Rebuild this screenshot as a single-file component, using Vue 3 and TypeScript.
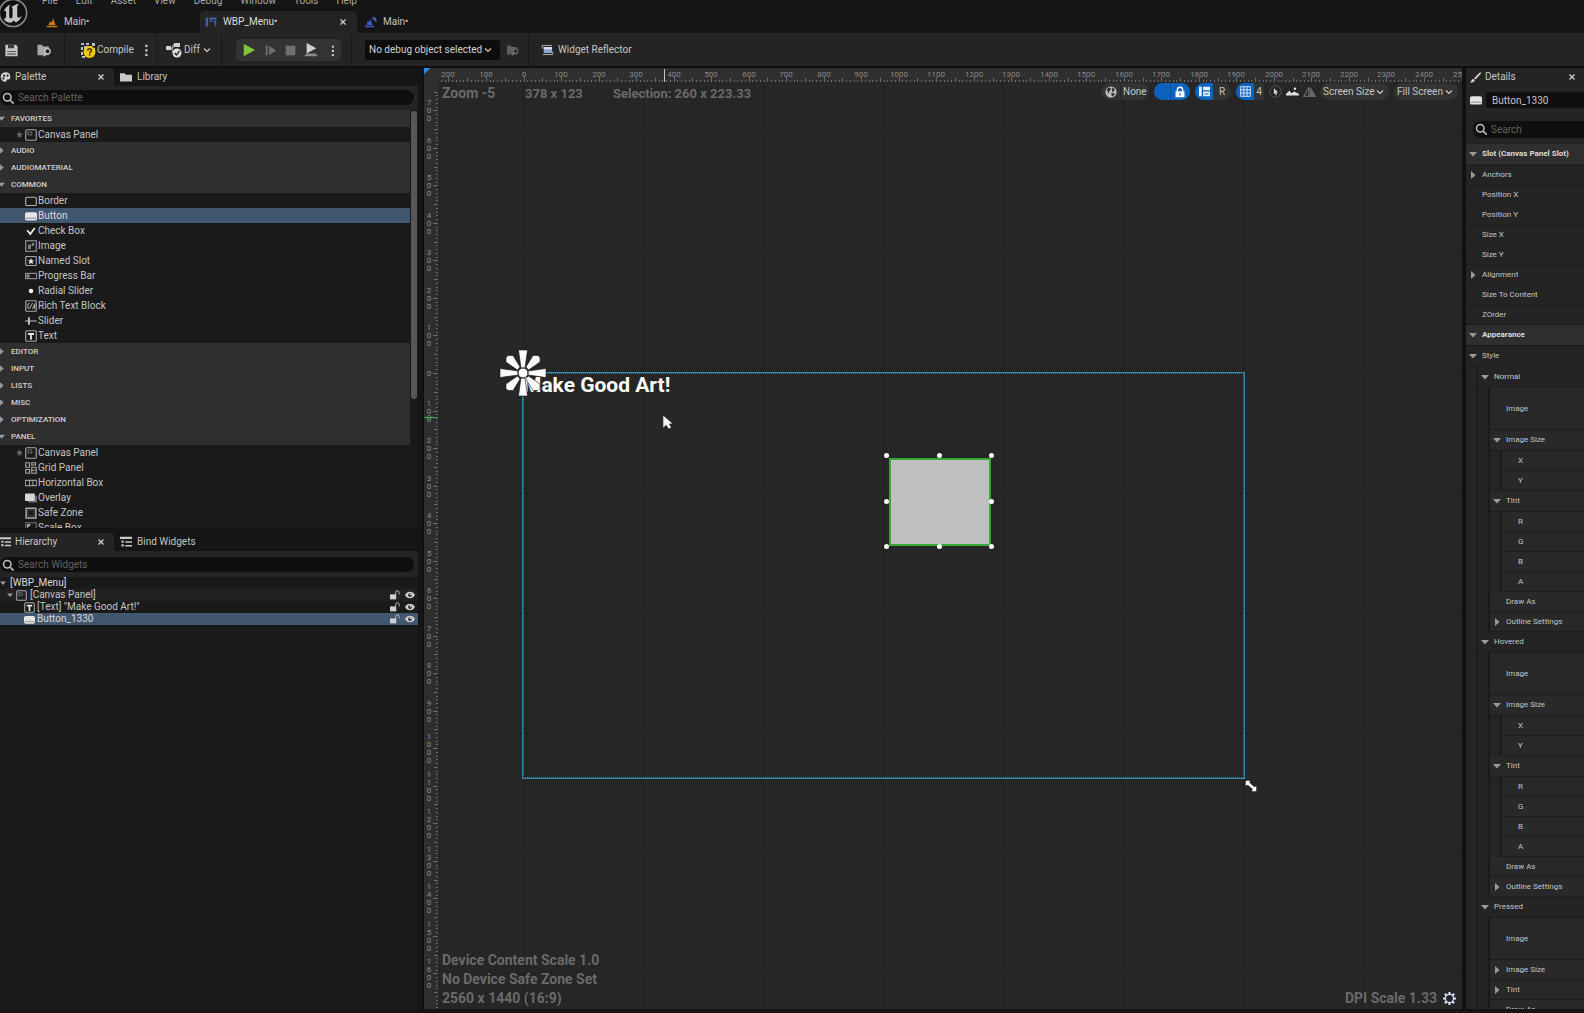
<script setup lang="ts">
import { computed, h, onBeforeUnmount, onMounted, ref } from 'vue'

const icons: Record<string, string> = {
  unreal:
    '<circle cx="16" cy="16" r="14.5" fill="#101010" stroke="#8c8c8c" stroke-width="1.6"/><path d="M6 15c1-4 4-7 8-8-1.500 1-2 2-2 3.500V20c0 1 .6 1.700 1.600 1.700S15.500 21 15.500 20v-8.500c0-1-.5-1.600-1.300-2C16.500 8 19 6.500 22.500 6c-1.500 1.500-2 2.500-2 4v9.500c0 1 .8 1.500 1.500 1.500 1.200 0 2.500-1 3.500-2.500-1 4-3.500 6.500-6.500 7.500l-2-2-3 2.500c-4 0-7-2-8-5 1.200.6 2.600.5 2.600-1.200v-5.500C8.600 13 7.500 13 6 15z" fill="#c4c4c4"/>',
  level: '<path d="M1 13h14v2H1zM3 12l2.500-5 2 2L9.500 3l3 9z" fill="#d07a1c"/>',
  widget: '<path d="M1 2h3v12H1zM6 2h9v3H6zM6 6h4v2H6zM12 6h3v8h-2V9h-1z" fill="#3c5fae"/>',
  actor: '<path d="M0 13h12v2H0zM2 12l2-6 2 2 1.500-4L10 12zM10 1l4 1 2 5-2 1-2-3-2 0z" fill="#3a5fc4"/>',
  save: '<path d="M1 2h12l2 2v11H1z" fill="#c6c6c6"/><path d="M4 2h7v4H4zM3 9h10v1H3zM3 12h10v1H3z" fill="#3a3a3a"/>',
  browse:
    '<path d="M0 2h5l1.500 2H13v10H0z" fill="#a8a8a8"/><circle cx="11.500" cy="9.500" r="3" fill="#242424" stroke="#c4c4c4" stroke-width="1.500"/><path d="M9.500 12L7 15" stroke="#c4c4c4" stroke-width="1.800"/>',
  compile:
    '<path d="M1 1h3v2H1zM6 1h3v2H6zM12 1h3v3h-3zM1 5h2v3H1zM1 10h2v3H1zM13 6h2v3h-2zM2 14h3v2H2zM4 4h8v5H4z" fill="#bdbdbd"/><circle cx="9.500" cy="10" r="6" fill="#f0c90f"/><path d="M7.800 8.500c0-2.200 3.600-2.200 3.600 0 0 1.300-1.800 1.400-1.800 2.900M9.600 12.300v1.500" stroke="#4a3700" stroke-width="1.500" fill="none"/>',
  diff: '<path d="M0 4h5v4H0zM8 1h6v4H8z" fill="#d0d0d0"/><path d="M5 6h2M7 6V3h2M6 6c0 4 1 5 2 5" stroke="#d0d0d0" fill="none"/><circle cx="11" cy="11" r="4.500" fill="#e0e0e0"/><path d="M8.500 11l2 2 3-4" stroke="#242424" stroke-width="1.400" fill="none"/>',
  chevron: '<path d="M2 5l6 6 6-6" fill="none" stroke="#cfcfcf" stroke-width="2.200"/>',
  play: '<path d="M2 1l13 7-13 7z" fill="#7ec63c"/>',
  step: '<path d="M1 1h3v14H1zM6 1l10 7-10 7z" fill="#6e6e6e"/>',
  stop: '<path d="M1 1h14v14H1z" fill="#6f6f6f"/>',
  launch: '<path d="M3 0l11 6-11 6z" fill="#d0d0d0"/><path d="M3 12h10l3 3H0z" fill="#8a8a8a"/>',
  dots: '<path d="M7 1h3v3H7zM7 7h3v3H7zM7 13h3v3H7z" fill="#c8c8c8"/>',
  reflector:
    '<path d="M3 4h11v8H3z" fill="#8ea5d8"/><path d="M3 4h11v3H3z" fill="#d5def2"/><path d="M1 6V2h13M15 10v4H2" fill="none" stroke="#a9b79c" stroke-width="1.300"/>',
  palette:
    '<path d="M8 1a7 7 0 1 0 0 14c2 0 1-2 2-3s5 1 5-4-3-7-7-7z" fill="#cfcfcf"/><circle cx="6" cy="6" r="1.500" fill="#222"/><circle cx="11" cy="6" r="1.500" fill="#222"/><circle cx="5" cy="10" r="1.500" fill="#222"/>',
  folder: '<path d="M0 3h6l2 2h8v9H0z" fill="#c9c9c9"/>',
  list: '<path d="M0 1h16v3H0zM2 6h3v3H2zM2 11h3v3H2zM7 7h9v2H7zM7 12h9v2H7z" fill="#c9c9c9"/>',
  search: '<circle cx="7" cy="7" r="5" fill="none" stroke="#c0c0c0" stroke-width="2"/><path d="M11 11l4.500 4.500" stroke="#c0c0c0" stroke-width="2.200"/>',
  close: '<path d="M3 3l10 10M13 3L3 13" stroke="#d0d0d0" stroke-width="2.400"/>',
  open: '<path d="M0 4h16L8 13z" fill="#9a9a9a"/>',
  shut: '<path d="M4 0v16l9-8z" fill="#9a9a9a"/>',
  star: '<path d="M8 0l2.200 5.500 5.800.5-4.500 3.700L13 15.500 8 12.300 3 15.500l1.500-5.800L0 6l5.800-.5z" fill="#6a6a6a"/>',
  canvas: '<rect x="1" y="1" width="14" height="14" rx="1.500" fill="none" stroke="#a8a8a8" stroke-width="1.500"/><path d="M4 8V4h5M9 4v4H4" fill="none" stroke="#8a8a8a"/>',
  border: '<rect x="1" y="3" width="14" height="11" rx="1.500" fill="none" stroke="#b4b4b4" stroke-width="1.500"/>',
  button: '<rect x="0" y="3" width="16" height="11" rx="2.500" fill="#e6e6e6"/><path d="M1 10h14v2H1z" fill="#a4a9ad"/>',
  check: '<path d="M3 7l4 5 6-8" fill="none" stroke="#f0f0f0" stroke-width="2.400"/>',
  image: '<rect x="1" y="1" width="14" height="14" fill="none" stroke="#9a9a9a" stroke-width="1.500"/><path d="M4 12V6h4v6zM9 8V4h3v4z" fill="#808080"/>',
  slot: '<rect x="1" y="2" width="14" height="12" rx="1" fill="none" stroke="#a8a8a8" stroke-width="1.500"/><path d="M8 4l1.200 3H12l-2 2 1 3-3-1.500L5 12l1-3-2-2h2.800z" fill="#e6e6e6"/>',
  progress: '<rect x="0.500" y="4.500" width="15" height="7" fill="none" stroke="#9a9a9a" stroke-width="1.400"/><path d="M2 6h4v4H2z" fill="#9a9a9a"/>',
  radial: '<circle cx="8" cy="8" r="3" fill="#f0f0f0"/>',
  rich: '<rect x="1" y="1" width="14" height="14" rx="1" fill="none" stroke="#a8a8a8" stroke-width="1.500"/><path d="M4 12V5h2M6 12l4-8M10 12l3-7v7" stroke="#b8b8b8" fill="none" stroke-width="1.300"/>',
  slider: '<path d="M0 8h16" stroke="#a8a8a8" stroke-width="1.600"/><path d="M4 3h2.500v10H4z" fill="#c4c4c4"/>',
  text: '<rect x="1" y="1" width="14" height="14" rx="1.500" fill="none" stroke="#a8a8a8" stroke-width="1.500"/><path d="M4 4h8v2.500H9.200V13H6.800V6.500H4z" fill="#e6e6e6"/>',
  grid: '<path d="M1 1h5v6H1zM9 1h5v3H9zM1 10h5v5H1zM9 7h6v8H9zM9 11h6" fill="none" stroke="#a8a8a8" stroke-width="1.500"/>',
  hbox: '<path d="M.5 4.500h15v7H.5zM6 5v6M10.500 5v6" fill="none" stroke="#9a9a9a" stroke-width="1.400"/>',
  overlay: '<rect x="4" y="5" width="12" height="9" rx="1" fill="#6e6e6e"/><rect x="0" y="2" width="13" height="10" rx="1" fill="#d6d6d6"/>',
  safe: '<path d="M1.500 1.500h13v13h-13z" fill="none" stroke="#a8a8a8" stroke-width="2"/><path d="M4 4h8v8H4z" fill="none" stroke="#555"/>',
  scale: '<path d="M1 1h14v14H1z" fill="none" stroke="#777" stroke-width="1.400"/><path d="M3 3h5L3 8z" fill="#d0d0d0"/>',
  unlock: '<path d="M0 7h10v8H0z" fill="#cfcfcf"/><path d="M9 7V4a2.800 2.800 0 0 1 5.600 0v3" fill="none" stroke="#bdbdbd" stroke-width="1.600"/>',
  lock: '<path d="M2 7h12v8H2z" fill="#fff"/><path d="M4.500 7V5a3.500 3.500 0 0 1 7 0v2" fill="none" stroke="#fff" stroke-width="2"/><path d="M7.200 9.500h1.600v3H7.200z" fill="#0d62bd"/>',
  eye: '<path d="M0 8c4-7 12-7 16 0-4 7-12 7-16 0z" fill="#cfcfcf"/><circle cx="8" cy="8" r="3" fill="#2a2a2a"/><circle cx="9" cy="7" r="1.300" fill="#eee"/>',
  globe: '<circle cx="8" cy="8" r="7.500" fill="#bdbdbd"/><path d="M2 5l3-3 3 1-1 3-2 1 1 2-1 1zM10 2l3 2-1 3-2 1-1-2zM8 10l4-1 1 2-3 3-1-1z" fill="#2d2d2d"/>',
  layout: '<path d="M0 1h4v14H0zM6 1h10v5H6zM6 8h10v7H6z" fill="#e8f2ff"/><path d="M8 10h6v3H8z" fill="#7aa9dc"/>',
  snap: '<path d="M1 1h14v14H1zM1 5.700h14M1 10.300h14M5.700 1v14M10.300 1v14" fill="none" stroke="#e8f2ff" stroke-width="1.300"/>',
  pointer: '<circle cx="8" cy="8" r="7" fill="none" stroke="#555" stroke-width="1.200"/><path d="M6 4l5 5-2 .5L10 12 8.500 12.500 7.500 10 6 11z" fill="#d8d8d8"/>',
  mount: '<path d="M0 13v-2l4-4 3 3 3-2 6 3v2z" fill="#e0e0e0"/><circle cx="11" cy="4.500" r="1.500" fill="#e0e0e0"/>',
  mirror: '<path d="M7 3v11H1zM9 3l6 11H9z" fill="none" stroke="#686868" stroke-width="1.500"/><path d="M9 3l6 11H9z" fill="#686868"/>',
  brush: '<path d="M15 0l1 2-8 9-2-2zM5 10l2 2c-1 3-4 3-7 4 2-2 2-6 5-6z" fill="#d8d8d8"/>',
  gear: '<path d="M8 0v16M0 8h16M2.300 2.300l11.400 11.400M13.700 2.300L2.300 13.700" stroke="#d6e2ff" stroke-width="2.600"/><circle cx="8" cy="8" r="5.800" fill="#d6e2ff"/><circle cx="8" cy="8" r="4.200" fill="#262626"/>',
  flower:
    '<g stroke="#161616" stroke-width=".6" fill="#fff"><path d="M22 19L19.500 1h9L26 19z"/><path d="M22 29l-2.500 18h9L26 29z"/><path d="M19 22L1 19.500v9L19 26z"/><path d="M29 22l18-2.500v9L29 26z"/><path d="M18.500 21L7 13V8.500l2-2h5L21 18z"/><path d="M29.500 21L41 13V8.500l-2-2h-5L27 18z"/><path d="M18.500 27L7 35V39.500l2 2h5L21 30z"/><path d="M29.500 27L41 35V39.500l-2 2h-5L27 30z"/></g><circle cx="24" cy="24" r="5" fill="#fff" stroke="#222"/>',
  cursor: '<path d="M1 0v14l3.500-3 2.500 4 3-1.500-2-4h4z" fill="#f4f4f4" stroke="#111" stroke-width=".6"/>',
  resize: '<path d="M2 2h5L6 4l6 5.500 2-1.500v6H9l1-2.500L4 6.500 2 8z" fill="#fff"/>',
}

const Icon = (props: { name: string }) =>
  h('svg', {
    viewBox: props.name === 'flower' ? '0 0 48 48' : props.name === 'unreal' ? '0 0 32 32' : '0 0 16 16',
    class: 'icon',
    'aria-hidden': 'true',
    innerHTML: icons[props.name],
  })

const menus = ['File', 'Edit', 'Asset', 'View', 'Debug', 'Window', 'Tools', 'Help']

interface Item { icon: string; label: string; fav?: boolean }
interface Category { name: string; items?: Item[] }
const categories: Category[] = [
  { name: 'FAVORITES', items: [{ icon: 'canvas', label: 'Canvas Panel', fav: true }] },
  { name: 'AUDIO' },
  { name: 'AUDIOMATERIAL' },
  {
    name: 'COMMON',
    items: [
      { icon: 'border', label: 'Border' },
      { icon: 'button', label: 'Button' },
      { icon: 'check', label: 'Check Box' },
      { icon: 'image', label: 'Image' },
      { icon: 'slot', label: 'Named Slot' },
      { icon: 'progress', label: 'Progress Bar' },
      { icon: 'radial', label: 'Radial Slider' },
      { icon: 'rich', label: 'Rich Text Block' },
      { icon: 'slider', label: 'Slider' },
      { icon: 'text', label: 'Text' },
    ],
  },
  { name: 'EDITOR' },
  { name: 'INPUT' },
  { name: 'LISTS' },
  { name: 'MISC' },
  { name: 'OPTIMIZATION' },
  {
    name: 'PANEL',
    items: [
      { icon: 'canvas', label: 'Canvas Panel', fav: true },
      { icon: 'grid', label: 'Grid Panel' },
      { icon: 'hbox', label: 'Horizontal Box' },
      { icon: 'overlay', label: 'Overlay' },
      { icon: 'safe', label: 'Safe Zone' },
      { icon: 'scale', label: 'Scale Box' },
    ],
  },
]
const selected = ref('Button')

interface Row { label: string; depth: number; state?: 'open' | 'shut'; kind?: 'head' | 'tall' }
const brush = (name: string, full: boolean): Row[] => {
  const leaf = (labels: string[]): Row[] => (full ? labels.map((label) => ({ label, depth: 3 })) : [])
  const state = full ? 'open' : 'shut'
  return [
    { label: name, depth: 1, state: 'open' },
    { label: 'Image', depth: 2, kind: 'tall' },
    { label: 'Image Size', depth: 2, state },
    ...leaf(['X', 'Y']),
    { label: 'Tint', depth: 2, state },
    ...leaf(['R', 'G', 'B', 'A']),
    { label: 'Draw As', depth: 2 },
    { label: 'Outline Settings', depth: 2, state: 'shut' },
  ]
}
const rows: Row[] = [
  { label: 'Slot (Canvas Panel Slot)', depth: 0, state: 'open', kind: 'head' },
  { label: 'Anchors', depth: 0, state: 'shut' },
  { label: 'Position X', depth: 0 },
  { label: 'Position Y', depth: 0 },
  { label: 'Size X', depth: 0 },
  { label: 'Size Y', depth: 0 },
  { label: 'Alignment', depth: 0, state: 'shut' },
  { label: 'Size To Content', depth: 0 },
  { label: 'ZOrder', depth: 0 },
  { label: 'Appearance', depth: 0, state: 'open', kind: 'head' },
  { label: 'Style', depth: 0, state: 'open' },
  ...brush('Normal', true),
  ...brush('Hovered', true),
  ...brush('Pressed', false),
]

// Ruler scale: 100 canvas units on screen, and where zero falls on each ruler.
const STEP = 37.52
const ZERO_X = 99.5
const ZERO_Y = 305
const view = ref<HTMLElement | null>(null)
const size = ref({ w: 1000, h: 900 })
const measure = () => {
  if (view.value) size.value = { w: view.value.clientWidth, h: view.value.clientHeight }
}
onMounted(() => {
  measure()
  window.addEventListener('resize', measure)
})
onBeforeUnmount(() => window.removeEventListener('resize', measure))

const mark = (zero: number, n: number) => Math.round(zero + n * STEP)
const marks = (zero: number, first: number, end: number) => {
  const out: number[] = []
  for (let n = first; mark(zero, n) <= end; n++) out.push(n)
  return out
}
const hMarks = computed(() => marks(ZERO_X, -2, size.value.w))
const vMarks = computed(() => marks(ZERO_Y, -7, size.value.h - 20))
const ticks = (zero: number, first: number, end: number, vertical: boolean) => {
  let d = ''
  for (let n = first; zero + (n * STEP) / 10 < end; n++) {
    const at = Math.round(zero + (n * STEP) / 10) + 0.5
    const len = n % 10 === 0 ? 5 : n % 5 === 0 ? 4 : 2
    d += vertical ? `M${14 - len} ${at}H14` : `M${at} ${14 - len}V14`
  }
  return d
}
const hTicks = computed(() => ticks(ZERO_X, -22, size.value.w, false))
const vTicks = computed(() => ticks(ZERO_Y, -75, size.value.h, true))
const digits = (n: number) => String(Math.abs(n * 100)).split('')
</script>

<template>
  <div class="editor">
    <header class="top">
      <Icon name="unreal" class="logo" />
      <div class="top-rows">
        <nav class="menus">
          <button v-for="m in menus" :key="m" type="button">{{ m }}</button>
        </nav>
        <div class="doc-tabs">
          <button type="button" class="doc first"><Icon name="level" />Main•</button>
          <div class="doc active">
            <button type="button"><Icon name="widget" />WBP_Menu•</button>
            <button type="button" class="x" aria-label="Close tab"><Icon name="close" /></button>
          </div>
          <button type="button" class="doc last"><Icon name="actor" />Main•</button>
        </div>
      </div>
    </header>

    <div class="toolbar">
      <div class="group files">
        <button type="button" aria-label="Save"><Icon name="save" /></button>
        <button type="button" aria-label="Browse"><Icon name="browse" class="wide" /></button>
      </div>
      <div class="group compile">
        <button type="button"><Icon name="compile" class="wide" />Compile</button>
        <button type="button" aria-label="Compile options"><Icon name="dots" /></button>
      </div>
      <div class="group diff">
        <button type="button"><Icon name="diff" class="wide" />Diff<Icon name="chevron" class="tiny" /></button>
      </div>
      <div class="group run-group">
        <div class="run">
          <button type="button" aria-label="Play"><Icon name="play" /></button>
          <button type="button" aria-label="Step"><Icon name="step" class="small" /></button>
          <button type="button" aria-label="Stop"><Icon name="stop" class="small" /></button>
          <button type="button" aria-label="Launch"><Icon name="launch" /></button>
          <button type="button" aria-label="Play options"><Icon name="dots" class="small" /></button>
        </div>
      </div>
      <div class="group debug">
        <label class="select dark">
          <select aria-label="Debug object"><option>No debug object selected</option></select>
          <Icon name="chevron" class="tiny" />
        </label>
        <button type="button" class="dim" aria-label="Find debug object"><Icon name="browse" /></button>
      </div>
      <div class="group last">
        <button type="button"><Icon name="reflector" />Widget Reflector</button>
      </div>
    </div>

    <main class="body">
      <aside class="left">
        <section class="panel palette">
          <div class="tabs">
            <div class="tab active">
              <button type="button"><Icon name="palette" />Palette</button>
              <button type="button" class="x" aria-label="Close palette"><Icon name="close" /></button>
            </div>
            <button type="button" class="tab"><Icon name="folder" />Library</button>
          </div>
          <label class="search"><Icon name="search" /><input type="text" placeholder="Search Palette" aria-label="Search Palette" /></label>
          <div class="scroll">
            <div class="cats">
              <template v-for="c in categories" :key="c.name">
                <button type="button" class="cat"><Icon :name="c.items ? 'open' : 'shut'" />{{ c.name }}</button>
                <button
                  v-for="it in c.items"
                  :key="it.label"
                  type="button"
                  class="item"
                  :class="{ on: it.label === selected }"
                  @click="selected = it.label"
                >
                  <span class="fav"><Icon v-if="it.fav" name="star" /></span><Icon :name="it.icon" />{{ it.label }}
                </button>
              </template>
            </div>
            <div class="bar"></div>
          </div>
        </section>

        <section class="panel hierarchy">
          <div class="tabs">
            <div class="tab active">
              <button type="button"><Icon name="list" />Hierarchy</button>
              <button type="button" class="x" aria-label="Close hierarchy"><Icon name="close" /></button>
            </div>
            <button type="button" class="tab"><Icon name="list" />Bind Widgets</button>
          </div>
          <label class="search"><Icon name="search" /><input type="text" placeholder="Search Widgets" aria-label="Search Widgets" /></label>
          <ul class="tree">
            <li class="root"><Icon name="open" class="arrow" />[WBP_Menu]</li>
            <li class="panel-row">
              <Icon name="open" class="arrow" /><Icon name="canvas" /><span>[Canvas Panel]</span>
              <Icon name="unlock" class="flag" /><Icon name="eye" class="flag" />
            </li>
            <li class="child">
              <Icon name="text" /><span>[Text] "Make Good Art!"</span>
              <Icon name="unlock" class="flag" /><Icon name="eye" class="flag" />
            </li>
            <li class="child on">
              <Icon name="button" /><span>Button_1330</span>
              <Icon name="unlock" class="flag" /><Icon name="eye" class="flag" />
            </li>
          </ul>
        </section>
      </aside>

      <section ref="view" class="view">
        <div class="gridlines"></div>
        <svg class="ruler-h" aria-hidden="true">
          <path :d="hTicks" />
          <text v-for="n in hMarks" :key="n" :x="mark(ZERO_X, n)" y="9">{{ Math.abs(n * 100) }}</text>
          <path class="pos" d="M240.500 1V14" />
        </svg>
        <svg class="ruler-v" aria-hidden="true">
          <path :d="vTicks" />
          <g v-for="n in vMarks" :key="n">
            <text
              v-for="(d, i) in digits(n)"
              :key="i"
              x="5"
              :y="mark(ZERO_Y, n) + 3 + i * 8 - (digits(n).length - 1) * 4"
            >{{ d }}</text>
          </g>
          <path class="green" d="M0 345.500H13M3 345.500a2 2 0 1 0 4 0a2 2 0 1 0-4 0" transform="translate(0 4)" />
        </svg>
        <div class="corner"></div>

        <div class="stats">
          <span class="zoom">Zoom -5</span><span class="coord">378 x 123</span><span>Selection: 260 x 223.33</span>
        </div>

        <div class="view-tools">
          <button type="button" class="pill world"><Icon name="globe" /><span class="none">None</span></button>
          <button type="button" class="pill blue" aria-label="Respect locks"><i></i><Icon name="lock" /></button>
          <div class="pill two">
            <button type="button" class="blue" aria-label="Flow layout"><Icon name="layout" /></button>
            <button type="button">R</button>
          </div>
          <div class="pill two snap">
            <button type="button" class="blue" aria-label="Grid snap"><Icon name="snap" /></button>
            <button type="button">4</button>
          </div>
          <button type="button" class="round" aria-label="Pointer"><Icon name="pointer" /></button>
          <button type="button" class="round" aria-label="Background"><Icon name="mount" /></button>
          <button type="button" class="round" aria-label="Mirror"><Icon name="mirror" /></button>
          <label class="pill select screen"><select aria-label="Screen size"><option>Screen Size</option></select><Icon name="chevron" class="tiny" /></label>
          <label class="pill select fill"><select aria-label="Fill mode"><option>Fill Screen</option></select><Icon name="chevron" class="tiny" /></label>
        </div>

        <div class="artboard">
          <span class="art-text">Make Good Art!</span>
          <Icon name="flower" class="flower" />
          <div class="widget">
            <i v-for="k in 8" :key="k" :class="'h' + k"></i>
          </div>
          <Icon name="cursor" class="cursor" />
          <Icon name="resize" class="resize" />
        </div>

        <div class="device">
          <div>Device Content Scale 1.0</div>
          <div>No Device Safe Zone Set</div>
          <div>2560 x 1440 (16:9)</div>
        </div>
        <div class="dpi">DPI Scale 1.33<button type="button" aria-label="DPI settings"><Icon name="gear" /></button></div>
      </section>

      <aside class="details">
        <div class="d-tab"><Icon name="brush" /><span>Details</span><button type="button" class="x" aria-label="Close details"><Icon name="close" /></button></div>
        <div class="d-name"><Icon name="button" /><input type="text" value="Button_1330" aria-label="Widget name" /></div>
        <label class="search d-search"><Icon name="search" /><input type="text" placeholder="Search" aria-label="Search details" /></label>
        <div class="rows">
          <div v-for="(r, i) in rows" :key="i" class="row" :class="[r.kind, r.state]">
            <i v-for="d in r.depth" :key="d" class="indent"></i>
            <div class="cell" :class="'d' + r.depth">
              <span class="arrow"><Icon v-if="r.state" :name="r.state" /></span>{{ r.label }}
            </div>
          </div>
        </div>
      </aside>
    </main>
  </div>
</template>

<style>
body {
  margin: 0;
  background: #151515;
  overflow: hidden;
}
</style>

<style scoped>
.editor {
  display: flex;
  flex-direction: column;
  height: 100vh;
  overflow: hidden;
  background: #151515;
  color: #c4c4c4;
  font: 10px/14px Roboto, "Liberation Sans", sans-serif;
}
.editor * {
  box-sizing: border-box;
}
button,
input,
select {
  margin: 0;
  padding: 0;
  border: 0;
  background: none;
  color: inherit;
  font: inherit;
  appearance: none;
  outline: 0;
}
button {
  display: flex;
  align-items: center;
  white-space: nowrap;
}
.icon {
  display: block;
  flex: none;
  width: 12px;
  height: 12px;
}
.icon.wide {
  width: 16px;
  height: 16px;
}
.icon.small {
  width: 11px;
  height: 11px;
}
.icon.tiny {
  width: 8px;
  height: 8px;
}
.x .icon {
  width: 8px;
  height: 8px;
}

/* title bar */
.top {
  display: flex;
  flex: none;
  height: 33px;
}
.logo {
  width: 30px;
  height: 30px;
  margin: -2px 0 0 -2px;
}
.top-rows {
  flex: 1;
}
.menus {
  display: flex;
  align-items: flex-end;
  gap: 18px;
  height: 9px;
  margin-bottom: 2px;
  padding-left: 14px;
}
.menus button {
  line-height: 16px;
  color: #a8a8a8;
}
.doc-tabs {
  display: flex;
  height: 22px;
}
.doc {
  display: flex;
  align-items: center;
}
.doc .icon {
  margin-right: 6px;
}
.first {
  width: 172px;
  padding-left: 18px;
}
.doc.active {
  justify-content: space-between;
  width: 157px;
  padding: 0 5px;
  background: #242424;
  border-radius: 4px 4px 0 0;
  color: #dcdcdc;
}
.doc.active .x .icon {
  margin-right: 5px;
}
.doc.last {
  padding-left: 8px;
}

/* toolbar */
.toolbar {
  display: flex;
  flex: none;
  align-items: stretch;
  height: 35px;
  padding-top: 1px;
  background: #242424;
  border-bottom: 2px solid #0f0f0f;
}
.group {
  display: flex;
  align-items: center;
  border-right: 1px solid #181818;
}
.group.last {
  padding-left: 11px;
  border: 0;
}
.group.last .icon {
  width: 15px;
  margin-right: 3px;
}
.files {
  gap: 18px;
  width: 65px;
  padding-left: 4px;
}
.files .icon {
  height: 14px;
  width: 15px;
}
.compile {
  gap: 6px;
  width: 92px;
  padding-left: 15px;
}
.compile .wide {
  margin-right: 1px;
}
.diff {
  width: 65px;
  padding-left: 9px;
}
.diff .wide {
  margin-right: 2px;
}
.diff .tiny {
  margin-left: 3px;
}
.run-group {
  width: 130px;
  padding-left: 14px;
}
.run {
  display: flex;
  align-items: center;
  justify-content: space-between;
  width: 105px;
  height: 22px;
  padding: 0 3px 0 6px;
  background: #333;
  border-radius: 4px;
}
.run .icon:not(.small) {
  width: 14px;
  height: 14px;
}
.debug {
  gap: 7px;
  width: 177px;
  padding-left: 13px;
}
.debug .dim {
  opacity: 0.45;
}
.select {
  display: flex;
  align-items: center;
}
.select .icon {
  flex: none;
  pointer-events: none;
}
.select select {
  flex: 1;
  min-width: 0;
}
.dark {
  width: 135px;
  height: 20px;
  padding: 0 8px 0 4px;
  background: #0d0d0d;
  border-radius: 3px;
  color: #d0d0d0;
}

/* columns */
.body {
  display: flex;
  flex: 1;
  min-height: 0;
  padding-bottom: 4px;
}
.left {
  display: flex;
  flex: none;
  flex-direction: column;
  width: 424px;
  padding-right: 5px;
  border-right: 1px solid #0c0c0c;
}
.panel {
  display: flex;
  flex-direction: column;
  background: #1a1a1a;
}
.palette {
  flex: none;
  height: 460px;
  margin-bottom: 5px;
}
.hierarchy {
  flex: 1;
}
.tabs {
  display: flex;
  flex: none;
  height: 18px;
  background: #151515;
}
.tab {
  display: flex;
  align-items: center;
  padding-left: 6px;
}
.tab.active {
  justify-content: space-between;
  width: 114px;
  padding: 0 9px 0 0;
  background: #242424;
  border-radius: 0 4px 0 0;
}
.tab .icon {
  margin-right: 5px;
}
.tab.active button:first-child .icon {
  width: 11px;
  margin-right: 4px;
}
.tab .x .icon {
  margin: 0;
}
.search {
  position: relative;
  display: flex;
  flex: none;
  align-items: center;
  height: 24px;
  padding: 4px 4px 5px 0;
  background: #242424;
}
.search .icon {
  position: absolute;
  left: 2px;
}
.search input {
  flex: 1;
  min-width: 0;
  height: 15px;
  padding-left: 18px;
  background: #0f0f0f;
  border-radius: 8px;
  line-height: 15px;
}
.search input::placeholder {
  color: #626262;
  opacity: 1;
}
.scroll {
  display: flex;
  flex: 1;
  align-items: flex-start;
  overflow: hidden;
  background: #1a1a1a;
}
.cats {
  flex: 1;
}
.bar {
  width: 6px;
  height: 288px;
  margin: 1px;
  background: #575757;
  border-radius: 3px;
}
.cat {
  gap: 6px;
  width: 100%;
  height: 17px;
  background: #2f2f2f;
  color: #d0d0d0;
  font-size: 8px;
  font-weight: 500;
}
.cat .icon {
  width: 7px;
  height: 7px;
  margin-left: -2px;
}
.item {
  gap: 1px;
  width: 100%;
  height: 15px;
}
.item .fav {
  width: 24px;
  padding-left: 16px;
}
.item .fav .icon {
  width: 7px;
  height: 7px;
}
.on {
  background: #40576f;
  color: #dadada;
}
.hierarchy .search {
  height: 26px;
  padding: 6px 4px 5px 0;
}
.tree {
  margin: 0;
  padding: 0;
  list-style: none;
}
.tree li {
  display: flex;
  align-items: center;
  gap: 2px;
  height: 12px;
  padding-right: 3px;
  line-height: 12px;
}
.tree .root {
  gap: 4px;
  color: #dcdcdc;
}
.tree .icon {
  width: 11px;
  height: 11px;
}
.tree .arrow {
  width: 6px;
  height: 6px;
}
.tree .panel-row {
  gap: 3px;
  padding-left: 7px;
  background: #212121;
}
.tree .child {
  gap: 3px;
  padding-left: 24px;
}
.tree .child .icon:first-child {
  margin-right: -1px;
}
.tree span {
  flex: 1;
}
.tree .flag {
  width: 10px;
  height: 10px;
  margin-left: 2px;
}

/* design surface */
.view {
  position: relative;
  flex: 1;
  min-width: 0;
  overflow: hidden;
  background: #262626;
  font-size: 14px;
  font-weight: 700;
  line-height: 19px;
  color: #6a6a6a;
}
.gridlines {
  position: absolute;
  inset: 0;
  background-image: linear-gradient(#212121 1px, transparent 1px), linear-gradient(90deg, #212121 1px, transparent 1px);
  background-size: 120px 120px;
  background-position: 99px 65px;
}
.ruler-h,
.ruler-v {
  position: absolute;
  top: 0;
  left: 0;
  background: #2f2f2f;
  fill: #8a8a8a;
  font-size: 8px;
  font-weight: 400;
  text-anchor: middle;
}
.ruler-h {
  width: 100%;
  height: 14px;
}
.ruler-v {
  width: 14px;
  height: 100%;
  clip-path: inset(14px 0 0 0);
}
.ruler-h path,
.ruler-v path {
  fill: none;
  stroke: #6a6a6a;
}
.ruler-h .pos {
  stroke: #c8c8c8;
}
.ruler-v .green {
  stroke: #44a347;
}
.corner {
  position: absolute;
  top: 0;
  left: 0;
  width: 14px;
  height: 14px;
  background: linear-gradient(135deg, #2d8be0 4px, #2f2f2f 5px);
}
.stats {
  position: absolute;
  top: 16px;
  left: 18px;
  display: flex;
  font-size: 13px;
}
.zoom {
  width: 83px;
  font-size: 14px;
}
.coord {
  width: 88px;
}
.view-tools {
  position: absolute;
  top: 15px;
  right: 4px;
  display: flex;
  align-items: center;
  gap: 5px;
  color: #c4c4c4;
  font-size: 10px;
  font-weight: 400;
  line-height: 16px;
}
.pill {
  display: flex;
  align-items: center;
  height: 17px;
  padding: 0 4px;
  overflow: hidden;
  background: #333;
  border-radius: 9px;
}
.world {
  width: 48px;
}
.none {
  margin-left: 3px;
  padding-left: 2px;
  border-left: 1px solid #262626;
}
.blue {
  background: #0d62bd;
}
.pill.blue {
  width: 36px;
}
.pill.blue i {
  width: 14px;
  height: 17px;
  border-right: 1px solid #0a4d96;
}
.pill.blue .icon {
  margin-left: 3px;
}
.pill.two {
  width: 36px;
  padding: 0;
}
.two button {
  flex: 1;
  justify-content: center;
  height: 17px;
}
.pill.snap {
  width: 28px;
  border-radius: 9px 0 0 9px;
}
.two .blue {
  flex: none;
  width: 18px;
}
.two .icon {
  width: 11px;
  height: 11px;
}
.round {
  justify-content: center;
  width: 12px;
  height: 17px;
}
.round .icon {
  width: 13px;
  height: 13px;
}
.pill.select {
  padding: 0 5px 0 3px;
}
.screen {
  width: 69px;
}
.fill {
  width: 64px;
}

.artboard {
  position: absolute;
  top: 304px;
  left: 98px;
  width: 723px;
  height: 407px;
  border: 1px solid #2788ac;
}
.artboard::after {
  content: "";
  position: absolute;
  inset: 0;
  border: 1px dotted #3f8ba5;
}
.art-text {
  position: absolute;
  top: 0;
  left: 0;
  color: #fff;
  font-size: 21px;
  line-height: 24px;
  white-space: nowrap;
}
.flower {
  position: absolute;
  z-index: 1;
  top: -24px;
  left: -24px;
  width: 48px;
  height: 48px;
}
.widget {
  position: absolute;
  top: 85px;
  left: 366px;
  width: 102px;
  height: 88px;
  background: #bfbfbf;
  border: 2px solid #36a836;
}
.widget i {
  position: absolute;
  width: 5px;
  height: 5px;
  margin: -3px;
  background: #fff;
  border-radius: 50%;
}
.h1, .h4, .h6 { left: -4px; }
.h2, .h7 { left: 50%; }
.h3, .h5, .h8 { left: calc(100% + 3px); }
.h1, .h2, .h3 { top: -4px; }
.h4, .h5 { top: 50%; }
.h6, .h7, .h8 { top: calc(100% + 3px); }
.cursor {
  position: absolute;
  top: 42px;
  left: 139px;
  width: 15px;
  height: 15px;
}
.resize {
  position: absolute;
  top: 406px;
  left: 721px;
  width: 14px;
  height: 14px;
}
.device {
  position: absolute;
  bottom: 1px;
  left: 18px;
}
.dpi {
  position: absolute;
  right: 6px;
  bottom: 1px;
  display: flex;
  gap: 6px;
}
.dpi .icon {
  width: 13px;
  height: 13px;
}

/* details */
.details {
  flex: none;
  width: 122px;
  overflow: hidden;
  background: #242424;
  border-left: 4px solid #111;
}
.d-tab {
  display: flex;
  align-items: center;
  height: 18px;
  padding-left: 4px;
}
.d-tab .icon {
  width: 11px;
  height: 11px;
}
.d-tab span {
  flex: 1;
  margin-left: 4px;
}
.d-tab .x {
  margin-right: 8px;
}
.d-tab .x .icon {
  width: 8px;
  height: 8px;
}
.d-name {
  display: flex;
  align-items: center;
  gap: 4px;
  padding: 6px 0 0 4px;
}
.d-name input {
  flex: 1;
  min-width: 0;
  height: 16px;
  padding-left: 6px;
  background: #0f0f0f;
  border-radius: 3px 0 0 3px;
}
.d-search {
  height: 36px;
  margin-left: 7px;
  padding: 6px 0 0;
}
.d-search .icon {
  left: 2px;
}
.d-search input {
  height: 17px;
  border-radius: 8px 0 0 8px;
}
.rows {
  font-size: 8px;
}
.row {
  display: flex;
  height: 20px;
  white-space: nowrap;
}
.row.open {
  height: 21px;
}
.row.tall {
  height: 42px;
}
.row.head {
  background: #2f2f2f;
  color: #dcdcdc;
  font-weight: 700;
}
.indent {
  flex: none;
  width: 12px;
  border-right: 2px solid #1b1b1b;
}
.cell {
  display: flex;
  flex: 1;
  align-items: center;
  border-bottom: 1px solid #1d1d1d;
}
.d2,
.d3 {
  background: #292929;
}
.rows .arrow {
  width: 16px;
  padding-left: 3px;
}
.rows .icon {
  width: 8px;
  height: 8px;
}
</style>
